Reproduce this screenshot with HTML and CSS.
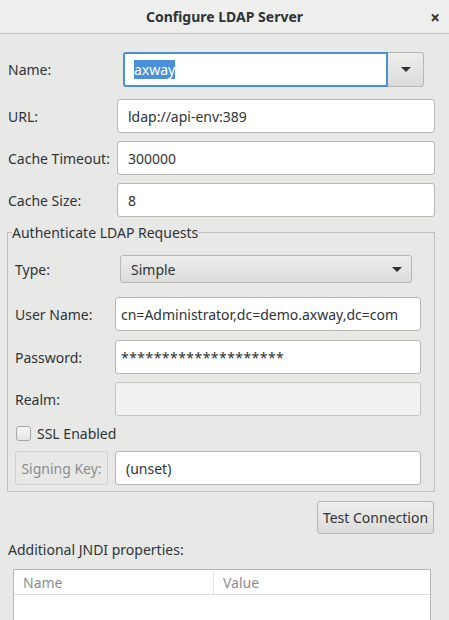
FILE: index.html
```html
<!DOCTYPE html>
<html>
<head>
<meta charset="utf-8">
<link rel="stylesheet" href="styles.css">
</head>
<body>
<div class="dialog">
  <div class="titlebar">
    <span class="title">Configure LDAP Server</span>
    <span class="close">×</span>
  </div>
  <div class="content">
    <div class="row row-name">
      <span class="label label-name">Name:</span>
      <div class="combo-entry">
        <div class="entry focused"><span class="sel">axway</span></div>
        <div class="combo-btn"><span class="arrow"></span></div>
      </div>
    </div>
    <div class="row row-url">
      <span class="label">URL:</span>
      <div class="entry">ldap://api-env:389</div>
    </div>
    <div class="row row-top">
      <span class="label">Cache Timeout:</span>
      <div class="entry">300000</div>
    </div>
    <div class="row row-top">
      <span class="label">Cache Size:</span>
      <div class="entry">8</div>
    </div>
    <fieldset class="group">
      <legend>Authenticate LDAP Requests</legend>
      <div class="grow grow-type">
        <span class="glabel glabel-type">Type:</span>
        <div class="combo"><span>Simple</span><span class="arrow"></span></div>
      </div>
      <div class="grow grow-user">
        <span class="glabel">User Name:</span>
        <div class="entry tight">cn=Administrator,dc=demo.axway,dc=com</div>
      </div>
      <div class="grow">
        <span class="glabel">Password:</span>
        <div class="entry tight pw">********************</div>
      </div>
      <div class="grow grow-realm">
        <span class="glabel">Realm:</span>
        <div class="entry disabled"></div>
      </div>
      <div class="check-row">
        <span class="checkbox"></span>
        <span class="check-label">SSL Enabled</span>
      </div>
      <div class="grow grow-sign">
        <div class="btn btn-disabled">Signing Key:</div>
        <div class="entry">(unset)</div>
      </div>
    </fieldset>
    <div class="actions">
      <div class="btn btn-test">Test Connection</div>
    </div>
    <div class="section-label">Additional JNDI properties:</div>
    <div class="table">
      <div class="thead">
        <div class="th th-name">Name</div>
        <div class="th th-value">Value</div>
      </div>
      <div class="tbody"></div>
    </div>
  </div>
</div>
</body>
</html>
```
FILE: styles.css
```css
* { box-sizing: border-box; }
html, body {
  margin: 0;
  padding: 0;
  width: 449px;
  height: 620px;
  overflow: hidden;
  background: #e8e8e7;
  font-family: "Noto Sans", "DejaVu Sans", sans-serif;
  font-size: 14px;
  color: #2e3436;
}
.dialog { width: 449px; height: 620px; display: flex; flex-direction: column; overflow: hidden; }
.titlebar {
  height: 34px;
  flex: none;
  background: #efefee;
  border-bottom: 1px solid #c4c4c2;
  display: flex;
  align-items: center;
  justify-content: center;
  position: relative;
}
.title { font-weight: bold; font-size: 14px; color: #2e3436; }
.close {
  position: absolute;
  right: 9px;
  top: 6px;
  font-size: 17px;
  font-weight: bold;
  color: #2e3436;
}
.content { padding: 18px 0 0 8px; }
.row { display: flex; align-items: center; }
.label { width: 109px; flex: none; }
.row .entry { flex: 1; }
.row-name { margin-right: 25px; height: 35px; }
.label-name { width: 115px; }
.row-url { margin-top: 12px; margin-right: 14px; }
.row-top { margin-top: 8px; margin-right: 14px; }
.entry {
  height: 34px;
  background: #fff;
  border: 1px solid #b8b8b5;
  border-radius: 3px;
  padding: 0 10px;
  display: flex;
  align-items: center;
  white-space: nowrap;
  overflow: hidden;
}
.entry.tight { padding: 0 5px; }
.combo-entry { flex: 1; display: flex; height: 35px; }
.entry.focused {
  flex: 1;
  height: 35px;
  border: 2px solid #4a90d9;
  border-radius: 3px 0 0 3px;
  padding: 0 0 0 9px;
}
.sel { background: #4a90d9; color: #fff; line-height: 19px; }
.combo-btn {
  width: 36px;
  height: 35px;
  border: 1px solid #b6b6b3;
  border-left: none;
  border-radius: 0 3px 3px 0;
  background: linear-gradient(#ededec, #dcdcdb);
  display: flex;
  align-items: center;
  justify-content: center;
}
.arrow {
  width: 0; height: 0;
  border-left: 5px solid transparent;
  border-right: 5px solid transparent;
  border-top: 5px solid #2e3436;
}
.group {
  margin: 7px 14px 0 -1px;
  padding: 0 13px 6px 7px;
  border: 1px solid #c0c0bd;
  min-width: 0;
}
.group legend { padding: 0; margin-left: -3px; line-height: 17px; }
.grow { display: flex; align-items: center; margin-top: 9px; }
.grow-type { margin-top: 14px; }
.grow-user { margin-top: 14px; }
.grow-realm { margin-top: 8px; }
.glabel { width: 100px; flex: none; }
.glabel-type { width: 105px; }
.grow .entry { flex: 1; }
.pw { letter-spacing: 0.45px; }
.combo {
  flex: 1;
  height: 28px;
  margin-right: 9px;
  border: 1px solid #b6b6b3;
  border-radius: 3px;
  background: linear-gradient(#ededec, #dcdcdb);
  display: flex;
  align-items: center;
  justify-content: space-between;
  padding: 0 9px 0 10px;
}
.entry.disabled { background: #f1f1f0; border-color: #c4c4c1; }
.check-row { display: flex; align-items: center; margin-top: 10px; height: 15px; }
.checkbox {
  width: 15px; height: 15px;
  border: 1px solid #a8a8a5;
  border-radius: 3px;
  background: linear-gradient(#f6f6f5, #e6e6e5);
  margin-left: 1px;
  margin-right: 6px;
}
.grow-sign { margin-top: 10px; }
.btn {
  height: 34px;
  border: 1px solid #b6b6b3;
  border-radius: 3px;
  background: linear-gradient(#ededec, #dcdcdb);
  display: flex;
  align-items: center;
  justify-content: center;
  white-space: nowrap;
}
.btn-disabled {
  width: 93px;
  flex: none;
  margin-right: 7px;
  background: #e8e8e7;
  border-color: #cfcfcc;
  color: #8b8e8f;
}
.actions { display: flex; justify-content: flex-end; margin: 9px 15px 0 0; }
.btn-test { width: 117px; height: 33px; }
.section-label { margin-top: 8px; height: 16px; line-height: 16px; }
.table {
  margin: 11px 18px 0 5px;
  background: #fff;
  border: 1px solid #b6b6b3;
  height: 100px;
}
.thead { display: flex; height: 25px; border-bottom: 1px solid #dcdcda; }
.th { color: #8b8e8f; display: flex; align-items: center; padding-left: 9px; }
.th-name { width: 200px; border-right: 1px solid #e4e4e2; }
.th-value { flex: 1; }
```
